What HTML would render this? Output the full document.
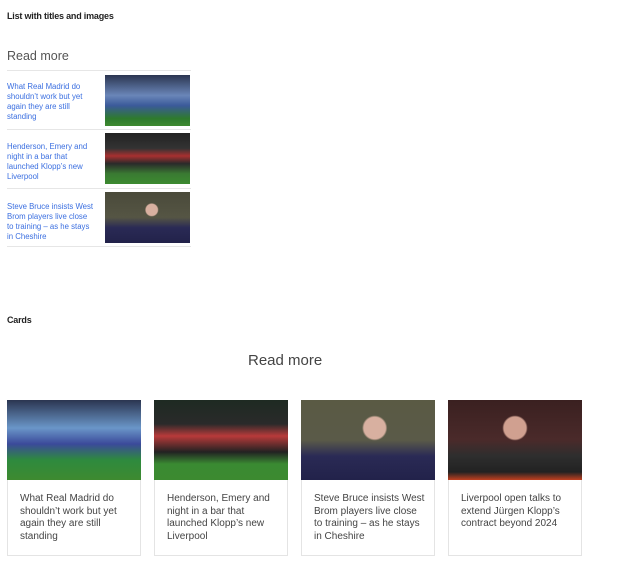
<!DOCTYPE html>
<html><head><meta charset="utf-8"><style>
body{margin:0;background:#fff;font-family:"Liberation Sans",sans-serif;width:624px;height:566px;position:relative;overflow:hidden}
.a{position:absolute}
h4{position:absolute;margin:0;font-size:9px;font-weight:bold;color:#222;letter-spacing:-0.2px}
.hr{position:absolute;left:7px;width:184px;height:1px;background:#e6e6e6}
.lt{position:absolute;left:7px;width:97px;font-size:7.8px;line-height:10px;color:#3b6fe0;white-space:nowrap}
.im{position:absolute}
.card{position:absolute;top:400px;width:134px;height:156px;border:1px solid #e4e4e4;box-sizing:border-box}
.card .p{height:80px;margin:-1px -1px 0 -1px}
.card .t{padding:13px 12px;font-size:10px;line-height:12.5px;color:#444;white-space:nowrap}
</style></head><body>
<h4 style="left:7px;top:11px">List with titles and images</h4>
<div class="a" style="left:7px;top:49px;font-size:12.5px;color:#555">Read more</div>
<div class="hr" style="top:70px"></div>
<div class="lt" style="top:82px">What Real Madrid do<br>shouldn’t work but yet<br>again they are still<br>standing</div>
<div class="im" style="left:105px;top:75px;width:85px;height:51px;background:linear-gradient(180deg,#2b3550 0%,#6a86b8 40%,#3b5a9a 60%,#2e7a2e 85%,#3e8a30 100%)"></div>
<div class="hr" style="top:129px"></div>
<div class="lt" style="top:142px">Henderson, Emery and<br>night in a bar that<br>launched Klopp’s new<br>Liverpool</div>
<div class="im" style="left:105px;top:133px;width:85px;height:51px;background:linear-gradient(180deg,#222 0%,#333 30%,#a83030 45%,#2a2a2a 60%,#3a7a32 80%,#3c8a30 100%)"></div>
<div class="hr" style="top:188px"></div>
<div class="lt" style="top:202px">Steve Bruce insists West<br>Brom players live close<br>to training – as he stays<br>in Cheshire</div>
<div class="im" style="left:105px;top:192px;width:85px;height:51px;background:radial-gradient(circle at 55% 35%,#d8b0a0 0 10%,transparent 12%),linear-gradient(180deg,#4a4a3a 0%,#555544 50%,#2a2a55 70%,#22224a 100%)"></div>
<div class="hr" style="top:246px"></div>

<h4 style="left:7px;top:315px">Cards</h4>
<div class="a" style="left:248px;top:352px;font-size:15px;color:#444">Read more</div>

<div class="card" style="left:7px"><div class="p" style="background:linear-gradient(180deg,#2b3550 0%,#6a96c8 35%,#3b4a9a 55%,#2e8a3e 75%,#3e8a30 100%)"></div><div class="t">What Real Madrid do<br>shouldn’t work but yet<br>again they are still<br>standing</div></div>
<div class="card" style="left:154px"><div class="p" style="background:linear-gradient(180deg,#1e2a22 0%,#2a2a2a 30%,#b83a3a 45%,#222 65%,#3a8a32 80%,#3c8a30 100%)"></div><div class="t">Henderson, Emery and<br>night in a bar that<br>launched Klopp’s new<br>Liverpool</div></div>
<div class="card" style="left:301px"><div class="p" style="background:radial-gradient(circle at 55% 35%,#d8b0a0 0 12%,transparent 14%),linear-gradient(180deg,#5a5a44 0%,#5a5a48 50%,#2a2a55 70%,#22224a 100%)"></div><div class="t">Steve Bruce insists West<br>Brom players live close<br>to training – as he stays<br>in Cheshire</div></div>
<div class="card" style="left:448px"><div class="p" style="background:radial-gradient(circle at 50% 35%,#d0a090 0 13%,transparent 15%),linear-gradient(180deg,#3a2020 0%,#4a2a2a 50%,#2e2e2e 70%,#222 90%,#c04020 100%)"></div><div class="t">Liverpool open talks to<br>extend Jürgen Klopp’s<br>contract beyond 2024</div></div>
</body></html>
